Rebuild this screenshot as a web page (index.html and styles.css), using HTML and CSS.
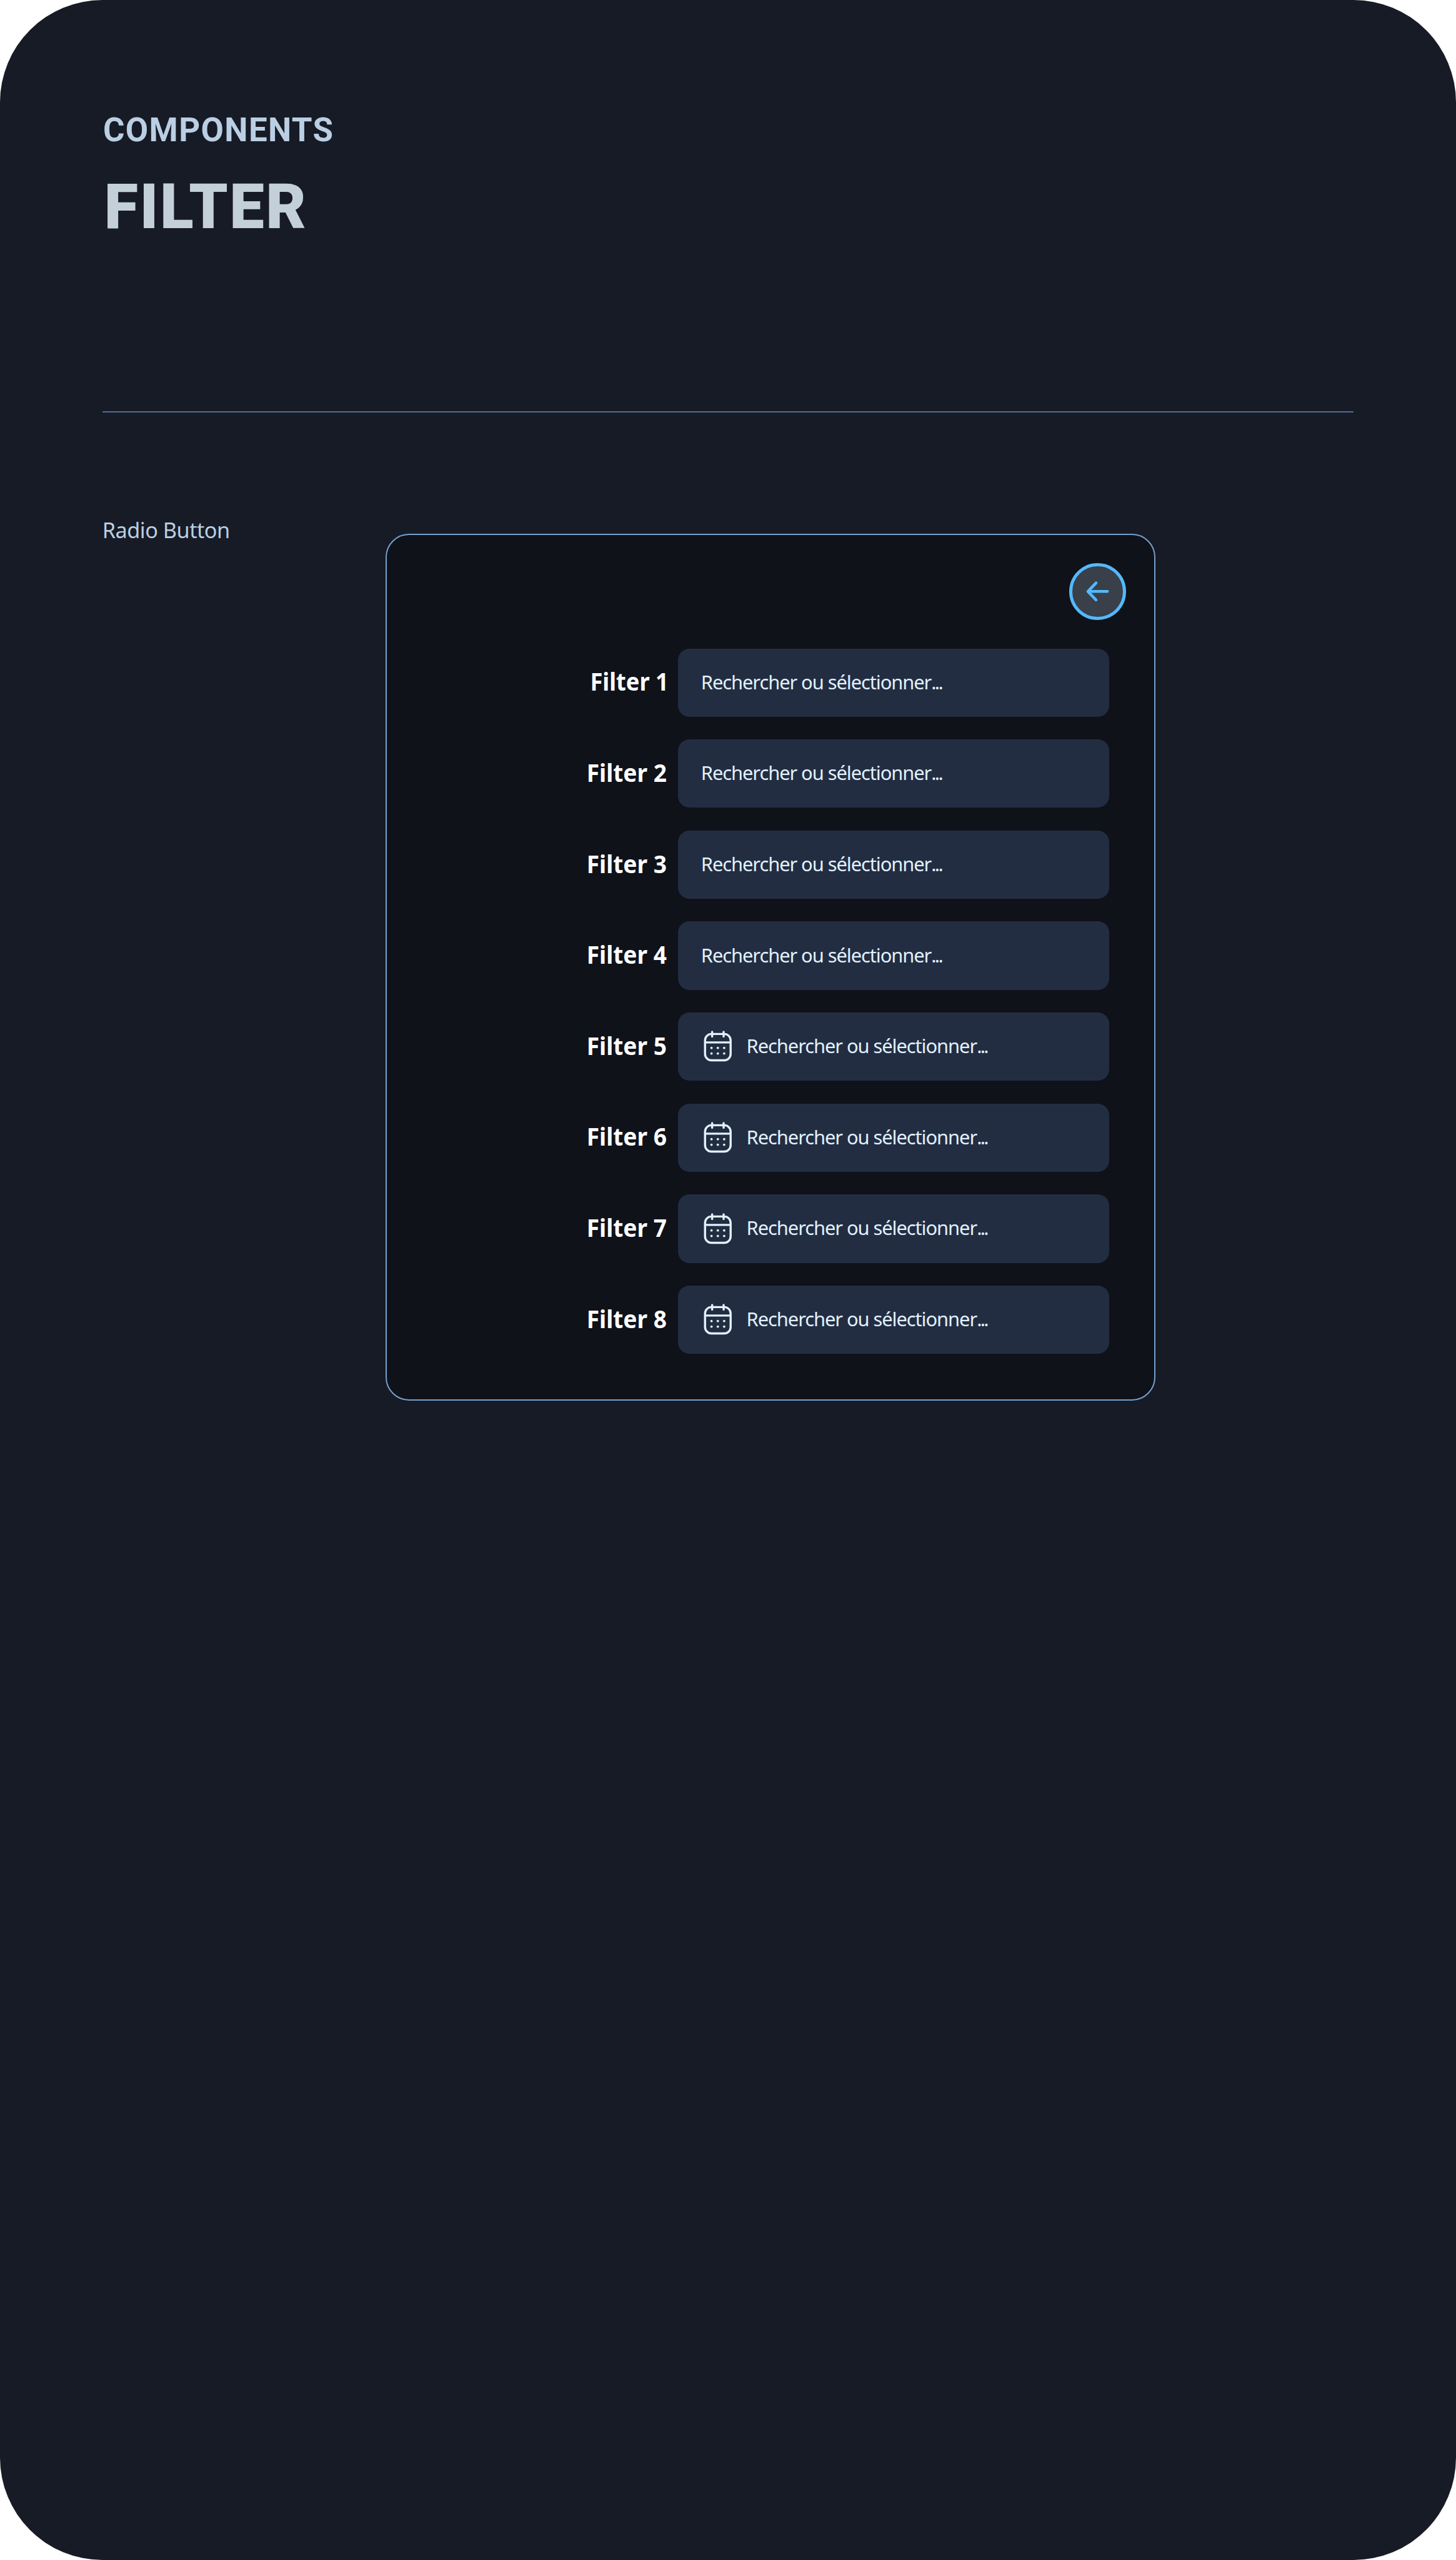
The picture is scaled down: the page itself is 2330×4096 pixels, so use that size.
FILE: index.html
```html
<!DOCTYPE html>
<html lang="fr">
<head>
<meta charset="utf-8">
<title>Components – Filter</title>
<link rel="stylesheet" href="styles.css">
</head>
<body>
<svg class="sprite" aria-hidden="true">
  <symbol id="calendar" viewBox="0 4 96 96">
    <g fill="none" stroke="currentColor" stroke-width="6" stroke-linecap="round">
      <rect x="11" y="17" width="72" height="74" rx="18"/>
      <path d="M11 40.7H83" stroke-linecap="butt"/>
      <path d="M31 11V24M63.3 11V24"/>
    </g>
    <g fill="currentColor">
      <circle cx="29.2" cy="56.2" r="3.3"/><circle cx="47" cy="56.2" r="3.3"/><circle cx="64.8" cy="56.2" r="3.3"/>
      <circle cx="29.2" cy="71.8" r="3.3"/><circle cx="47" cy="71.8" r="3.3"/><circle cx="64.8" cy="71.8" r="3.3"/>
    </g>
  </symbol>
</svg>
<main class="board">
  <header class="header">
    <p class="eyebrow">COMPONENTS</p>
    <h1 class="title">FILTER</h1>
  </header>
  <section class="section">
    <h2 class="section-name">Radio Button</h2>
    <div class="panel">
      <button class="back" aria-label="Retour">
        <svg class="back-icon" viewBox="0 0 96 96" fill="none" stroke="currentColor" stroke-width="8" stroke-linecap="round" stroke-linejoin="round"><path d="M76 48H22M44 24L21 48L44 72"/></svg>
      </button>
      <div class="filters">
        <div class="row"><span class="label label-one">Filter 1</span><div class="field"><span class="hint">Rechercher ou sélectionner<span class="dots">...</span></span></div></div>
        <div class="row"><span class="label">Filter 2</span><div class="field"><span class="hint">Rechercher ou sélectionner<span class="dots">...</span></span></div></div>
        <div class="row"><span class="label">Filter 3</span><div class="field"><span class="hint">Rechercher ou sélectionner<span class="dots">...</span></span></div></div>
        <div class="row"><span class="label">Filter 4</span><div class="field"><span class="hint">Rechercher ou sélectionner<span class="dots">...</span></span></div></div>
        <div class="row"><span class="label">Filter 5</span><div class="field"><svg class="cal"><use href="#calendar"/></svg><span class="hint">Rechercher ou sélectionner<span class="dots">...</span></span></div></div>
        <div class="row"><span class="label">Filter 6</span><div class="field"><svg class="cal"><use href="#calendar"/></svg><span class="hint">Rechercher ou sélectionner<span class="dots">...</span></span></div></div>
        <div class="row"><span class="label">Filter 7</span><div class="field"><svg class="cal"><use href="#calendar"/></svg><span class="hint">Rechercher ou sélectionner<span class="dots">...</span></span></div></div>
        <div class="row"><span class="label">Filter 8</span><div class="field"><svg class="cal"><use href="#calendar"/></svg><span class="hint">Rechercher ou sélectionner<span class="dots">...</span></span></div></div>
      </div>
    </div>
  </section>
</main>
</body>
</html>
```
FILE: styles.css
```css
:root {
  --u: 0.56887px;
}
* {
  box-sizing: border-box;
  margin: 0;
  padding: 0;
}
body {
  background: #fff;
  font-family: "Noto Sans", "Open Sans", sans-serif;
}
.sprite {
  display: none;
}
.board {
  width: 2330px;
  height: 4096px;
  padding: 0 calc(288 * var(--u));
  border-radius: calc(288 * var(--u));
  background: #171b26;
  overflow: hidden;
}
.header {
  height: calc(1160 * var(--u));
  padding-top: calc(305 * var(--u));
  border-bottom: 2px solid #4f6f94;
  font-family: Roboto, sans-serif;
  white-space: nowrap;
}
.eyebrow {
  padding-left: calc(2 * var(--u));
  font-size: calc(92.8 * var(--u));
  line-height: calc(120 * var(--u));
  font-weight: 700;
  letter-spacing: calc(2.4 * var(--u));
  color: #bacfe3;
}
.title {
  margin-top: calc(59 * var(--u));
  padding-left: calc(5 * var(--u));
  font-size: calc(174.4 * var(--u));
  line-height: calc(200 * var(--u));
  font-weight: 900;
  letter-spacing: calc(4.4 * var(--u));
  color: #c4d0d9;
}
.section {
  display: flex;
  align-items: flex-start;
  padding-top: calc(340.5 * var(--u));
}
.section-name {
  width: calc(797 * var(--u));
  margin-top: calc(-50 * var(--u));
  font-size: calc(60.2 * var(--u));
  line-height: calc(80 * var(--u));
  font-weight: 400;
  letter-spacing: calc(-0.9 * var(--u));
  color: #bacfe3;
  white-space: nowrap;
}
.panel {
  display: flex;
  flex-direction: column;
  width: calc(2166 * var(--u));
  height: calc(2439 * var(--u));
  padding: calc(80 * var(--u)) calc(127.5 * var(--u)) 0 0;
  border: 2px solid #75a2cf;
  border-radius: calc(66 * var(--u));
  background: #0f1219;
}
.back {
  display: flex;
  align-items: center;
  justify-content: center;
  align-self: flex-end;
  width: calc(160 * var(--u));
  height: calc(160 * var(--u));
  margin-right: calc(-48 * var(--u));
  border: 5px solid #54b9ff;
  border-radius: 50%;
  background: #394049;
  color: #54b9ff;
}
.back-icon {
  width: calc(96 * var(--u));
  height: calc(96 * var(--u));
  flex: none;
}
.filters {
  display: flex;
  flex-direction: column;
  gap: calc(64 * var(--u));
  margin-top: calc(80 * var(--u));
}
.row {
  display: flex;
  justify-content: flex-end;
  align-items: center;
  gap: calc(32 * var(--u));
  height: calc(192 * var(--u));
}
.label {
  padding-bottom: calc(5.5 * var(--u));
  font-size: calc(68.6 * var(--u));
  line-height: calc(96 * var(--u));
  font-weight: 700;
  color: #fff;
  white-space: nowrap;
  transform: scaleX(0.95);
  transform-origin: right center;
}
.label-one {
  margin-right: calc(-5 * var(--u));
  transform: scaleX(0.93);
}
.field {
  display: flex;
  align-items: center;
  gap: calc(32 * var(--u));
  width: calc(1212 * var(--u));
  height: 100%;
  padding-left: calc(64 * var(--u));
  border-radius: calc(32 * var(--u));
  background: #232d42;
  color: #e1f2fe;
}
.cal {
  width: calc(96 * var(--u));
  height: calc(96 * var(--u));
  flex: none;
}
.hint {
  padding-bottom: calc(2.5 * var(--u));
  font-size: calc(54.2 * var(--u));
  line-height: calc(80 * var(--u));
  letter-spacing: calc(-1.85 * var(--u));
  white-space: nowrap;
}
.dots {
  letter-spacing: calc(-4.8 * var(--u));
}
```
